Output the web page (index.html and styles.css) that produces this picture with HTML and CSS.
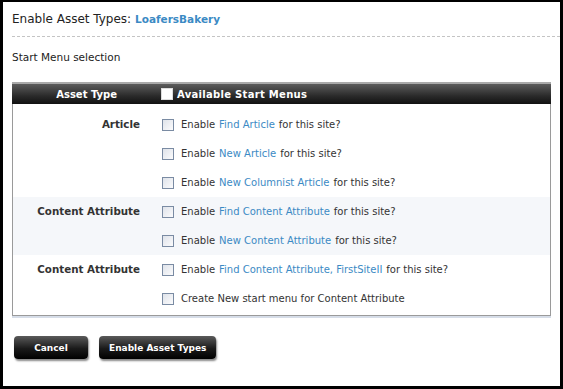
FILE: index.html
```html
<!DOCTYPE html>
<html lang="en">
<head>
  <meta charset="UTF-8" />
  <title>Enable Asset Types</title>
  <link rel="stylesheet" href="styles.css">
</head>
<body>
  <div class="page">
    <h1 class="title">Enable Asset Types: <span class="site">LoafersBakery</span></h1>
    <div class="subtitle">Start Menu selection</div>

    <div class="grid">
      <div class="grid-head">
        <div class="col-type">Asset Type</div>
        <div class="col-menus"><span class="box box-white"></span>Available Start Menus</div>
      </div>

      <div class="group first">
        <div class="col-type">Article</div>
        <div class="col-menus">
          <div class="item"><span class="box"></span>Enable <a>Find Article</a> for this site?</div>
          <div class="item"><span class="box"></span>Enable <a>New Article</a> for this site?</div>
          <div class="item"><span class="box"></span>Enable <a>New Columnist Article</a> for this site?</div>
        </div>
      </div>

      <div class="group shaded">
        <div class="col-type">Content Attribute</div>
        <div class="col-menus">
          <div class="item"><span class="box"></span>Enable <a>Find Content Attribute</a> for this site?</div>
          <div class="item"><span class="box"></span>Enable <a>New Content Attribute</a> for this site?</div>
        </div>
      </div>

      <div class="group last">
        <div class="col-type">Content Attribute</div>
        <div class="col-menus">
          <div class="item"><span class="box"></span>Enable <a>Find Content Attribute, FirstSiteII</a> for this site?</div>
          <div class="item"><span class="box"></span>Create New start menu for Content Attribute</div>
        </div>
      </div>
    </div>

    <div class="actions">
      <button class="btn btn-cancel">Cancel</button>
      <button class="btn">Enable Asset Types</button>
    </div>
  </div>
</body>
</html>
```

FILE: styles.css
```css
body {
  margin: 0;
  background: #000;
  font-family: 'DejaVu Sans', Verdana, sans-serif;
  font-size: 10px;
  color: #333;
}

.page {
  background: #fff;
  margin: 2px 3px 0 3px;
  height: 384px;
  padding: 0 0 0 9px;
  box-sizing: border-box;
}

.title {
  margin: 0;
  padding: 10px 0 10px;
  font-size: 12px;
  font-weight: normal;
  color: #222;
  border-bottom: 1px dashed #c4c4c4;
}

.site {
  color: #3b8ac4;
  font-size: 10.5px;
  font-weight: bold;
}

.subtitle {
  padding: 14px 0 0;
  font-size: 10.5px;
  color: #222;
}

.grid {
  width: 537px;
  margin-top: 19px;
  border: 1px solid #9a9a9a;
  border-top: none;
  box-shadow: 0 2px 0 #d6dde8;
}

.grid-head {
  display: flex;
  height: 20px;
  align-items: center;
  color: #fff;
  font-weight: bold;
  background: linear-gradient(#5c5c5c, #2a2a2a 60%, #111);
  border-top: 2px solid #aaa;
  margin: 0 -1px;
}

.col-type {
  width: 105px;
  text-align: right;
  flex-shrink: 0;
}

.group .col-type {
  width: 127px;
  padding-top: 8px;
  color: #333;
  font-weight: bold;
  font-size: 10.3px;
}

.grid-head .col-menus {
  padding-left: 44px;
  display: flex;
  align-items: center;
  letter-spacing: 0.3px;
}

.group {
  display: flex;
}

.group .col-menus {
  padding-left: 22px;
}

.group.first {
  padding: 6px 0 0;
}

.group.last {
  padding-bottom: 2px;
}

.shaded {
  background: #f5f7fa;
}

.item {
  height: 29px;
  display: flex;
  align-items: center;
}

.item a {
  color: #3b8ac4;
  margin: 0 4px;
}

.box {
  display: inline-block;
  width: 10px;
  height: 10px;
  border: 1px solid #7a8ba3;
  background: linear-gradient(135deg, #dfe3ea, #fbfbfc);
  margin-right: 7px;
}

.box-white {
  background: #fff;
  border-color: #ddd;
  margin-right: 4px;
}

.actions {
  display: flex;
  gap: 11px;
  padding: 20px 0 0 2px;
}

.btn {
  height: 23px;
  padding: 0 10px;
  border: none;
  border-radius: 4px;
  background: linear-gradient(#5a5a5a, #1a1a1a 55%, #000);
  box-shadow: 1px 2px 2px #888;
  color: #fff;
  font-family: 'DejaVu Sans', Verdana, sans-serif;
  font-size: 9px;
  font-weight: bold;
}

.btn-cancel {
  width: 74px;
}
```
